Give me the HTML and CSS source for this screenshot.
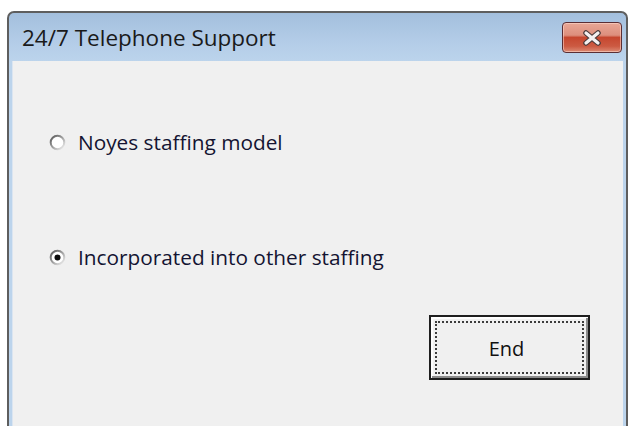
FILE: index.html
```html
<!DOCTYPE html>
<html>
<head>
<meta charset="utf-8">
<link rel="stylesheet" href="styles.css">
</head>
<body>
<div class="window">
  <div class="titlebar">
    <span class="title">24/7 Telephone Support</span>
    <button class="close" aria-label="Close">
      <svg width="26" height="16" viewBox="0 0 26 16">
        <path d="M7 3 L19 13 M19 3 L7 13" stroke="#4a3a3a" stroke-width="5.5" stroke-linecap="round" fill="none"/>
        <path d="M7 3 L19 13 M19 3 L7 13" stroke="#f4f0f0" stroke-width="3.2" stroke-linecap="round" fill="none"/>
      </svg>
    </button>
  </div>
  <div class="client">
    <label class="option first">
      <svg class="radio" width="17" height="17" viewBox="0 0 17 17">
        <defs>
          <linearGradient id="ring" x1="0" y1="0" x2="1" y2="1">
            <stop offset="0" stop-color="#555555"/>
            <stop offset="0.5" stop-color="#a0a0a0"/>
            <stop offset="1" stop-color="#f6f6f6"/>
          </linearGradient>
        </defs>
        <circle cx="8.5" cy="8.5" r="6.8" fill="#fff" stroke="url(#ring)" stroke-width="2"/>
      </svg>
      <span>Noyes staffing model</span>
    </label>
    <label class="option second">
      <svg class="radio" width="17" height="17" viewBox="0 0 17 17">
        <circle cx="8.5" cy="8.5" r="6.8" fill="#fff" stroke="url(#ring)" stroke-width="2"/>
        <circle cx="8.5" cy="8.5" r="3" fill="#0c0c0c"/>
      </svg>
      <span>Incorporated into other staffing</span>
    </label>
    <div class="actions">
      <button class="end"><span class="focus">End</span></button>
    </div>
  </div>
</div>
</body>
</html>
```
FILE: styles.css
```css
html, body {
  margin: 0;
  padding: 0;
  background: #ffffff;
  overflow: hidden;
}

body {
  width: 628px;
  height: 426px;
  font-family: "Open Sans", "Noto Sans", sans-serif;
}

.window {
  margin: 11px 0 0 7px;
  width: 621px;
  height: 415px;
  box-sizing: border-box;
  border: 2px solid #5e5e5e;
  border-bottom: none;
  border-radius: 7px 7px 0 0;
  background: linear-gradient(#a3bfdd 0px, #b4cde8 30px, #bcd4ec 49px);
  padding: 0 3px;
  display: flex;
  flex-direction: column;
}

.titlebar {
  height: 48px;
  display: flex;
  align-items: flex-start;
  justify-content: space-between;
  padding-left: 10px;
  padding-right: 1px;
}

.title {
  margin-top: 11px;
  font-size: 22.5px;
  line-height: 28px;
  color: #1a1a1a;
}

.close {
  margin-top: 9px;
  width: 60px;
  height: 31px;
  padding: 0;
  border: 1px solid #5a2e34;
  border-radius: 4px;
  background: linear-gradient(#e8a796 0%, #dd8f7d 42%, #c6472f 50%, #cc5a42 80%, #dc8b75 100%);
  box-shadow: inset 0 0 0 1px rgba(255, 220, 210, 0.55);
  display: flex;
  align-items: center;
  justify-content: center;
}

.client {
  flex: 1;
  background: #f0f0f0;
  border-left: 1px solid #dbe5f1;
}

.option {
  display: flex;
  align-items: center;
  gap: 12px;
  margin-left: 36px;
  font-size: 20.8px;
  line-height: 28px;
  color: #141432;
}

.option.first {
  margin-top: 67px;
}

.option.second {
  margin-top: 87px;
}

.radio {
  flex: none;
}

.actions {
  display: flex;
  justify-content: flex-end;
  padding-right: 33px;
  margin-top: 44px;
}

.end {
  width: 161px;
  height: 65px;
  box-sizing: border-box;
  padding: 4px;
  border: 2px solid #1e1e1e;
  background: #f0f0f0;
  box-shadow: inset 1px 1px 0 #ffffff, inset -2px -2px 0 #8c8c8c, inset 2px 2px 0 #fdfdfd;
  font-family: inherit;
  font-size: 20px;
  color: #111;
  display: flex;
}

.focus {
  flex: 1;
  border: 2px dotted #3c3c3c;
  display: flex;
  align-items: center;
  justify-content: center;
  padding-right: 6px;
  padding-top: 2px;
}
```
